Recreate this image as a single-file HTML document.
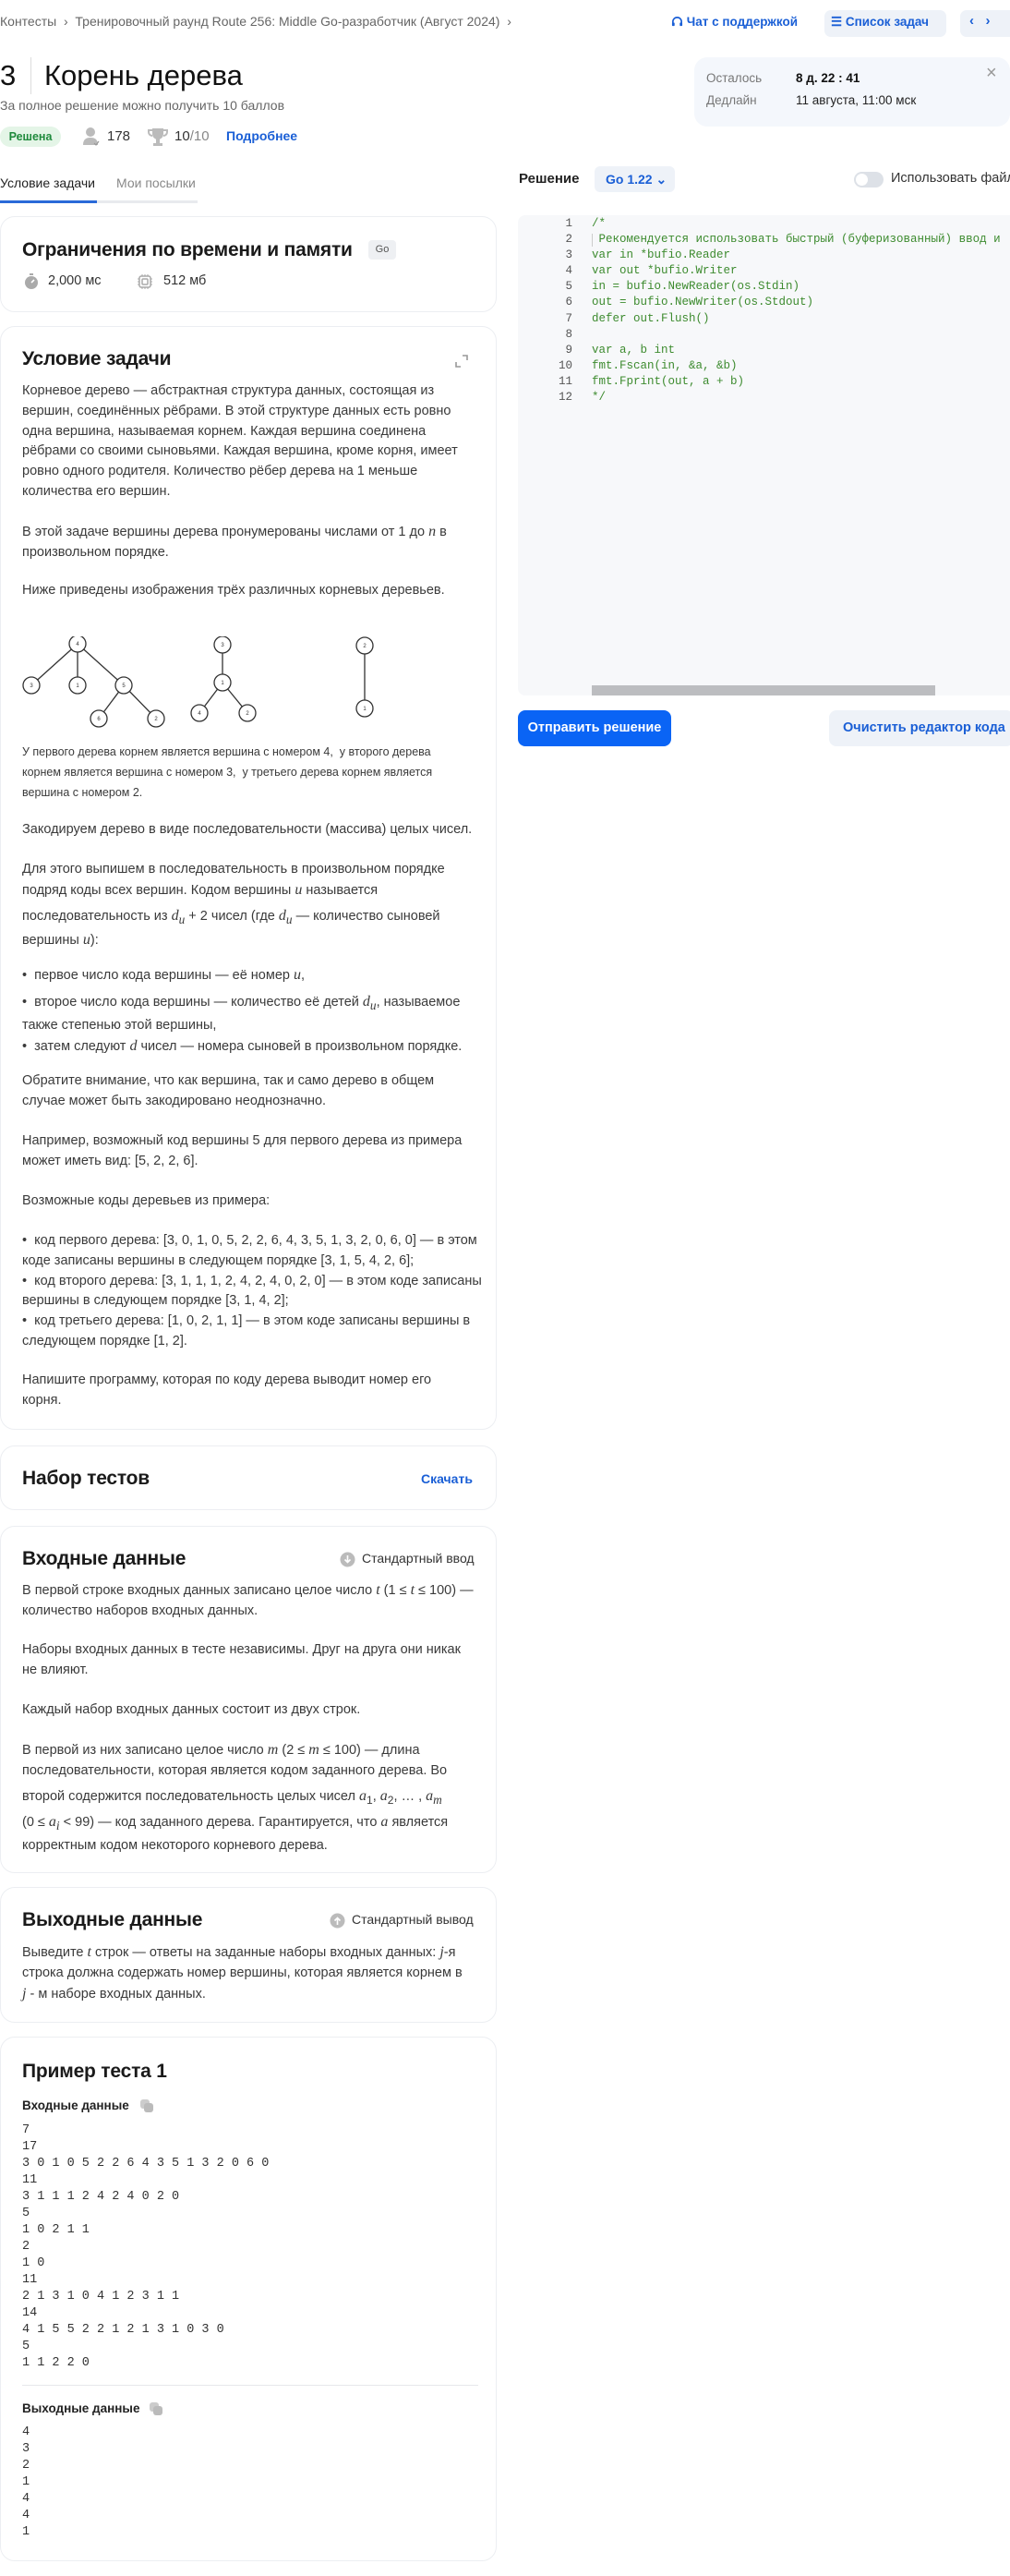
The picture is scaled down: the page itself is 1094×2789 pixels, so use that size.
<!DOCTYPE html>
<html><head><meta charset="utf-8"><style>
*{margin:0;padding:0;box-sizing:border-box}
body{width:1094px;height:2789px;position:relative;background:#fff;font-family:"Liberation Sans","Noto Sans CJK SC",sans-serif;color:#222;overflow:hidden}
.a{position:absolute;white-space:nowrap}
.card{position:absolute;left:0;width:538px;border:1px solid #eceef2;border-radius:16px;background:#fff}
.h{position:absolute;left:23px;font-size:21px;font-weight:bold;color:#1a1a1a;white-space:nowrap;line-height:30px;letter-spacing:-0.2px}
.p{position:absolute;left:23px;font-size:14.5px;line-height:21.8px;color:#3a3a3a;white-space:nowrap}
.m{font-family:"Liberation Serif",serif;font-style:italic;font-size:16px}
.mono{font-family:"Liberation Mono",monospace;font-size:13.5px;line-height:18px;color:#333;position:absolute;left:23px;white-space:pre}
.code{position:absolute;left:641px;font-family:"Liberation Mono",monospace;font-size:12.5px;line-height:17.1px;color:#3d8b2f;white-space:pre}
.ln{position:absolute;left:580px;width:40px;text-align:right;font-family:"Liberation Mono",monospace;font-size:12.5px;line-height:17.1px;color:#555;white-space:pre}
.blue{color:#1a5fd6}
</style></head><body>

<div class="a" style="left:0;top:15px;font-size:14px;color:#666">Контесты &nbsp;›&nbsp; Тренировочный раунд Route 256: Middle Go-разработчик (Август 2024) &nbsp;›</div>
<div class="a blue" style="left:727px;top:16px;font-size:13.5px;font-weight:bold">
<svg width="13" height="13" viewBox="0 0 14 14" style="vertical-align:-2px"><path d="M2 9V7a5 5 0 0 1 10 0v2" fill="none" stroke="#1a5fd6" stroke-width="1.8"/><rect x="1" y="8" width="3" height="4" rx="1" fill="#1a5fd6"/><rect x="10" y="8" width="3" height="4" rx="1" fill="#1a5fd6"/></svg> Чат с поддержкой</div>
<div class="a" style="left:893px;top:11px;width:132px;height:29px;background:#eef2f8;border-radius:7px"></div>
<div class="a blue" style="left:900px;top:16px;font-size:13.5px;font-weight:bold">☰ Список задач</div>
<div class="a" style="left:1040px;top:11px;width:60px;height:29px;background:#eef2f8;border-radius:7px"></div>
<div class="a blue" style="left:1050px;top:14px;font-size:15px;font-weight:bold">‹ &nbsp;&nbsp;›</div>

<div class="a" style="left:0;top:63px;font-size:31px;color:#111;line-height:38px">3</div>
<div class="a" style="left:33px;top:62px;width:1px;height:40px;background:#ddd"></div>
<div class="a" style="left:48px;top:63px;font-size:31px;color:#111;line-height:38px;font-weight:500">Корень дерева</div>
<div class="a" style="left:0;top:106px;font-size:14px;color:#666">За полное решение можно получить 10 баллов</div>
<div class="a" style="left:0;top:137px;width:66px;height:22px;border-radius:11px;background:#e4f5e7;color:#1f8a3c;font-size:12.5px;font-weight:bold;text-align:center;line-height:22px">Решена</div>
<svg class="a" style="left:89px;top:137px" width="20" height="22" viewBox="0 0 20 22"><circle cx="9" cy="6" r="5" fill="#bbb"/><path d="M1 20c0-6 3-8 8-8s8 2 8 8z" fill="#bbb"/><path d="M13 18l2 2 3-4" stroke="#999" fill="none" stroke-width="1.2"/></svg>
<div class="a" style="left:116px;top:139px;font-size:15px;color:#333">178</div>
<svg class="a" style="left:160px;top:137px" width="22" height="22" viewBox="0 0 22 22"><path d="M5 2h12v6a6 6 0 0 1-12 0z" fill="#bbb"/><path d="M5 4H1v2a4 4 0 0 0 4 4M17 4h4v2a4 4 0 0 1-4 4" fill="none" stroke="#bbb" stroke-width="2"/><rect x="9" y="13" width="4" height="5" fill="#bbb"/><rect x="6" y="18" width="10" height="3" fill="#bbb"/></svg>
<div class="a" style="left:189px;top:139px;font-size:15px;color:#333">10<span style="color:#888">/10</span></div>
<div class="a blue" style="left:245px;top:139px;font-size:14px;font-weight:bold">Подробнее</div>

<div class="a" style="left:752px;top:62px;width:342px;height:75px;background:#f4f7fc;border-radius:14px"></div>
<div class="a" style="left:765px;top:77px;font-size:13.5px;color:#777">Осталось</div>
<div class="a" style="left:862px;top:77px;font-size:13.5px;color:#111;font-weight:bold">8 д. 22 : 41</div>
<div class="a" style="left:765px;top:101px;font-size:13.5px;color:#777">Дедлайн</div>
<div class="a" style="left:862px;top:101px;font-size:13.5px;color:#222">11 августа, 11:00 мск</div>
<div class="a" style="left:1068px;top:68px;font-size:20px;color:#999">×</div>

<div class="a" style="left:0;top:190px;font-size:14px;color:#222">Условие задачи</div>
<div class="a" style="left:126px;top:190px;font-size:14px;color:#888">Мои посылки</div>
<div class="a" style="left:0;top:217px;width:214px;height:3px;background:#e8eaee"></div>
<div class="a" style="left:0;top:217px;width:105px;height:3px;background:#2a6ad8"></div>

<div class="a" style="left:562px;top:185px;font-size:15px;font-weight:bold;color:#222">Решение</div>
<div class="a" style="left:644px;top:180px;width:87px;height:28px;background:#eef2f8;border-radius:6px"></div>
<div class="a blue" style="left:656px;top:186px;font-size:14px;font-weight:bold">Go 1.22 ⌄</div>
<div class="a" style="left:925px;top:186px;width:32px;height:17px;border-radius:9px;background:#dde1e7"></div>
<div class="a" style="left:927px;top:188px;width:13px;height:13px;border-radius:50%;background:#fff"></div>
<div class="a" style="left:965px;top:185px;font-size:14.5px;color:#333">Использовать файл</div>

<div class="a" style="left:561px;top:233px;width:540px;height:520px;background:#f7f8fa;border-radius:8px"></div>
<div class="ln" style="top:234px">1
2
3
4
5
6
7
8
9
10
11
12</div>
<div class="a" style="left:641px;top:253px;width:1px;height:14px;background:#ccc"></div>
<div class="code" style="top:234px">/*
 Рекомендуется использовать быстрый (буферизованный) ввод и
var in *bufio.Reader
var out *bufio.Writer
in = bufio.NewReader(os.Stdin)
out = bufio.NewWriter(os.Stdout)
defer out.Flush()

var a, b int
fmt.Fscan(in, &amp;a, &amp;b)
fmt.Fprint(out, a + b)
*/</div>
<div class="a" style="left:641px;top:742px;width:372px;height:11px;background:#bcbdc0"></div>
<div class="a" style="left:561px;top:769px;width:166px;height:39px;background:#0a64f5;border-radius:8px;color:#fff;font-size:14.5px;font-weight:bold;text-align:center;line-height:39px">Отправить решение</div>
<div class="a" style="left:898px;top:769px;width:200px;height:39px;background:#eef2f8;border-radius:8px;font-size:14.5px;font-weight:bold;line-height:39px;padding-left:15px" ><span class="blue">Очистить редактор кода</span></div>

<div class="card" style="top:234px;height:104px">
<div class="h" style="top:21px">Ограничения по времени и памяти</div>
<div class="a" style="left:398px;top:25px;width:30px;height:21px;background:#eef0f3;border-radius:4px;font-size:11px;color:#555;text-align:center;line-height:21px">Go</div>
<svg class="a" style="left:25px;top:61px" width="16" height="18" viewBox="0 0 16 18"><circle cx="8" cy="10" r="7" fill="#aaa"/><rect x="6" y="0" width="4" height="2" fill="#aaa"/><path d="M8 10l3-3" stroke="#fff" stroke-width="1.6"/></svg>
<div class="a" style="left:51px;top:61px;font-size:14.5px;color:#333">2,000 мс</div>
<svg class="a" style="left:147px;top:61px" width="18" height="18" viewBox="0 0 18 18"><rect x="3" y="3" width="12" height="12" rx="2" fill="none" stroke="#aaa" stroke-width="1.5"/><rect x="6" y="6" width="6" height="6" rx="1" fill="none" stroke="#aaa" stroke-width="1.5"/><path d="M6 1v2M9 1v2M12 1v2M6 15v2M9 15v2M12 15v2M1 6h2M1 9h2M1 12h2M15 6h2M15 9h2M15 12h2" stroke="#aaa"/></svg>
<div class="a" style="left:176px;top:61px;font-size:14.5px;color:#333">512 мб</div>
</div>

<div class="card" style="top:353px;height:1195px">
<div class="h" style="top:20px">Условие задачи</div>
<svg class="a" style="left:492px;top:30px" width="14" height="14" viewBox="0 0 14 14"><path d="M8 1h5v5M6 13H1V8" fill="none" stroke="#999" stroke-width="1.6"/></svg>
<div class="p" style="top:59px">Корневое дерево — абстрактная структура данных, состоящая из<br>вершин, соединённых рёбрами. В этой структуре данных есть ровно<br>одна вершина, называемая корнем. Каждая вершина соединена<br>рёбрами со своими сыновьями. Каждая вершина, кроме корня, имеет<br>ровно одного родителя. Количество рёбер дерева на 1 меньше<br>количества его вершин.</div>
<div class="p" style="top:211px">В этой задаче вершины дерева пронумерованы числами от 1 до <span class="m">n</span> в<br>произвольном порядке.</div>
<div class="p" style="top:275px">Ниже приведены изображения трёх различных корневых деревьев.</div>
<svg class="a" style="left:0;top:335px" width="538" height="110" viewBox="0 0 538 110" fill="#fff" stroke="#333" stroke-width="1.3">
<g><line x1="83" y1="8" x2="33" y2="53"/><line x1="83" y1="8" x2="83" y2="53"/><line x1="83" y1="8" x2="133" y2="53"/><line x1="133" y1="53" x2="106" y2="89"/><line x1="133" y1="53" x2="168" y2="89"/>
<line x1="240" y1="9" x2="240" y2="50"/><line x1="240" y1="50" x2="215" y2="83"/><line x1="240" y1="50" x2="267" y2="83"/><line x1="394" y1="10" x2="394" y2="78"/>
<circle cx="83" cy="8" r="9"/><circle cx="33" cy="53" r="9"/><circle cx="83" cy="53" r="9"/><circle cx="133" cy="53" r="9"/><circle cx="106" cy="89" r="9"/><circle cx="168" cy="89" r="9"/>
<circle cx="240" cy="9" r="9"/><circle cx="240" cy="50" r="9"/><circle cx="215" cy="83" r="9"/><circle cx="267" cy="83" r="9"/><circle cx="394" cy="10" r="9"/><circle cx="394" cy="78" r="9"/></g>
<g font-size="6" fill="#333" stroke="none" text-anchor="middle" font-family="Liberation Sans"><text x="83" y="10">4</text><text x="33" y="55">3</text><text x="83" y="55">1</text><text x="133" y="55">5</text><text x="106" y="91">6</text><text x="168" y="91">2</text><text x="240" y="11">3</text><text x="240" y="52">1</text><text x="215" y="85">4</text><text x="267" y="85">2</text><text x="394" y="12">2</text><text x="394" y="80">1</text></g></svg>
<div class="p" style="top:449px;font-size:12.5px;line-height:22px">У первого дерева корнем является вершина с номером 4, &nbsp;у второго дерева<br>корнем является вершина с номером 3, &nbsp;у третьего дерева корнем является<br>вершина с номером 2.</div>
<div class="p" style="top:534px">Закодируем дерево в виде последовательности (массива) целых чисел.</div>
<div class="p" style="top:577px">Для этого выпишем в последовательность в произвольном порядке<br>подряд коды всех вершин. Кодом вершины <span class="m">u</span> называется</div>
<div class="p" style="top:627px">последовательность из <span class="m">d<sub>u</sub></span> + 2 чисел (где <span class="m">d<sub>u</sub></span> — количество сыновей<br>вершины <span class="m">u</span>):</div>
<div class="p" style="top:691px;left:23px">•&nbsp; первое число кода вершины — её номер <span class="m">u</span>,</div>
<div class="p" style="top:720px">•&nbsp; второе число кода вершины — количество её детей <span class="m">d<sub>u</sub></span>, называемое<br>также степенью этой вершины,<br>•&nbsp; затем следуют <span class="m">d</span> чисел — номера сыновей в произвольном порядке.</div>
<div class="p" style="top:806px">Обратите внимание, что как вершина, так и само дерево в общем<br>случае может быть закодировано неоднозначно.</div>
<div class="p" style="top:871px">Например, возможный код вершины 5 для первого дерева из примера<br>может иметь вид: [5, 2, 2, 6].</div>
<div class="p" style="top:936px">Возможные коды деревьев из примера:</div>
<div class="p" style="top:979px">•&nbsp; код первого дерева: [3, 0, 1, 0, 5, 2, 2, 6, 4, 3, 5, 1, 3, 2, 0, 6, 0] — в этом<br>коде записаны вершины в следующем порядке [3, 1, 5, 4, 2, 6];<br>•&nbsp; код второго дерева: [3, 1, 1, 1, 2, 4, 2, 4, 0, 2, 0] — в этом коде записаны<br>вершины в следующем порядке [3, 1, 4, 2];<br>•&nbsp; код третьего дерева: [1, 0, 2, 1, 1] — в этом коде записаны вершины в<br>следующем порядке [1, 2].</div>
<div class="p" style="top:1130px">Напишите программу, которая по коду дерева выводит номер его<br>корня.</div>
</div>

<div class="card" style="top:1565px;height:70px">
<div class="h" style="top:20px">Набор тестов</div>
<div class="a blue" style="left:455px;top:27px;font-size:14px;font-weight:bold">Скачать</div>
</div>

<div class="card" style="top:1652px;height:376px">
<div class="h" style="top:20px">Входные данные</div>
<svg class="a" style="left:367px;top:27px" width="17" height="17" viewBox="0 0 17 17"><circle cx="8.5" cy="8.5" r="8" fill="#bbb"/><path d="M8.5 4v7M5.5 8.5l3 3 3-3" stroke="#fff" stroke-width="1.6" fill="none"/></svg>
<div class="a" style="left:391px;top:26px;font-size:14px;color:#333">Стандартный ввод</div>
<div class="p" style="top:58px">В первой строке входных данных записано целое число <span class="m">t</span> (1 ≤ <span class="m">t</span> ≤ 100) —<br>количество наборов входных данных.</div>
<div class="p" style="top:123px">Наборы входных данных в тесте независимы. Друг на друга они никак<br>не влияют.</div>
<div class="p" style="top:188px">Каждый набор входных данных состоит из двух строк.</div>
<div class="p" style="top:231px">В первой из них записано целое число <span class="m">m</span> (2 ≤ <span class="m">m</span> ≤ 100) — длина<br>последовательности, которая является кодом заданного дерева. Во</div>
<div class="p" style="top:281px">второй содержится последовательность целых чисел <span class="m">a</span><sub>1</sub>, <span class="m">a</span><sub>2</sub>, … , <span class="m">a<sub>m</sub></span></div>
<div class="p" style="top:309px">(0 ≤ <span class="m">a<sub>i</sub></span> &lt; 99) — код заданного дерева. Гарантируется, что <span class="m">a</span> является<br>корректным кодом некоторого корневого дерева.</div>
</div>

<div class="card" style="top:2043px;height:147px">
<div class="h" style="top:20px">Выходные данные</div>
<svg class="a" style="left:356px;top:27px" width="17" height="17" viewBox="0 0 17 17"><circle cx="8.5" cy="8.5" r="8" fill="#bbb"/><path d="M8.5 13V6M5.5 8.5l3-3 3 3" stroke="#fff" stroke-width="1.6" fill="none"/></svg>
<div class="a" style="left:380px;top:26px;font-size:14px;color:#333">Стандартный вывод</div>
<div class="p" style="top:59px">Выведите <span class="m">t</span> строк — ответы на заданные наборы входных данных: <span class="m">j</span>-я<br>строка должна содержать номер вершины, которая является корнем в<br><span class="m">j</span> - м наборе входных данных.</div>
</div>

<div class="card" style="top:2205px;height:568px">
<div class="h" style="top:22px">Пример теста 1</div>
<div class="a" style="left:23px;top:66px;font-size:13.5px;font-weight:bold;color:#222">Входные данные</div>
<svg class="a" style="left:150px;top:66px" width="16" height="16" viewBox="0 0 16 16"><rect x="1" y="1" width="10" height="10" rx="3" fill="#ccc"/><rect x="5" y="5" width="10" height="10" rx="3" fill="#bbb"/></svg>
<div class="mono" style="top:92px">7
17
3 0 1 0 5 2 2 6 4 3 5 1 3 2 0 6 0
11
3 1 1 1 2 4 2 4 0 2 0
5
1 0 2 1 1
2
1 0
11
2 1 3 1 0 4 1 2 3 1 1
14
4 1 5 5 2 2 1 2 1 3 1 0 3 0
5
1 1 2 2 0</div>
<div class="a" style="left:23px;top:376px;width:494px;height:1px;background:#e6e8ec"></div>
<div class="a" style="left:23px;top:394px;font-size:13.5px;font-weight:bold;color:#222">Выходные данные</div>
<svg class="a" style="left:160px;top:394px" width="16" height="16" viewBox="0 0 16 16"><rect x="1" y="1" width="10" height="10" rx="3" fill="#ccc"/><rect x="5" y="5" width="10" height="10" rx="3" fill="#bbb"/></svg>
<div class="mono" style="top:419px">4
3
2
1
4
4
1</div>
</div>
</body></html>
